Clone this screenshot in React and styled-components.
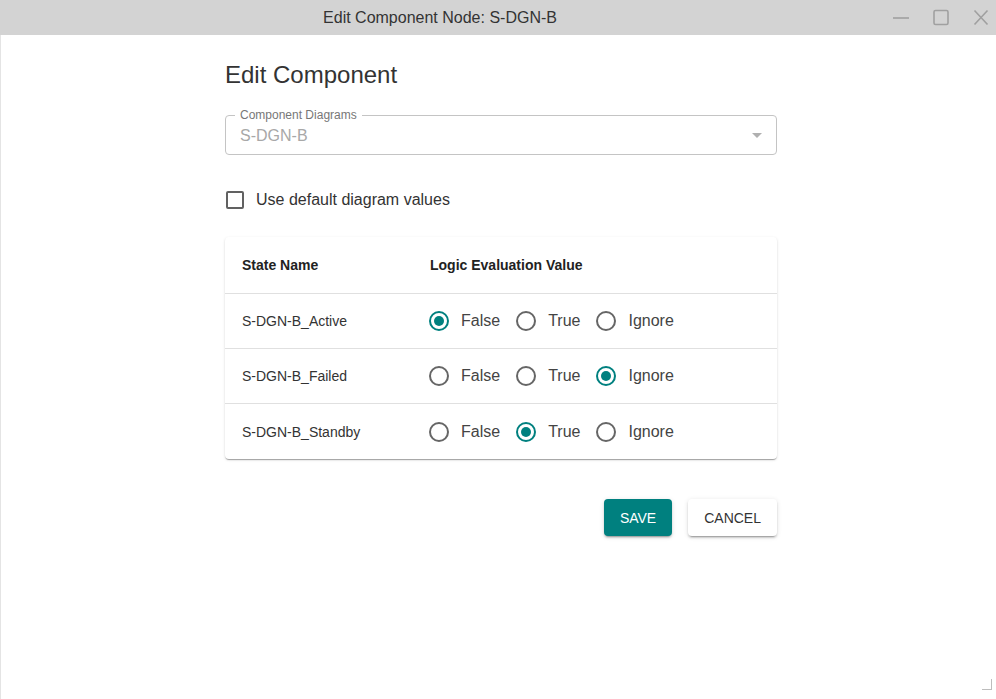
import styled, { createGlobalStyle } from 'styled-components'

const GlobalStyle = createGlobalStyle`
    html, body {
        margin: 0;
        padding: 0;
        background: #ffffff;
        font-family: "Liberation Sans", Arial, sans-serif;
    }
`;

const rows = [
    { name: 'S-DGN-B_Active', value: 'False' },
    { name: 'S-DGN-B_Failed', value: 'Ignore' },
    { name: 'S-DGN-B_Standby', value: 'True' },
]

const options = ['False', 'True', 'Ignore']

function Radio({ checked }) {
    return (
        <RadioIcon viewBox="0 0 24 24" $checked={checked}>
            <circle cx="12" cy="12" r="9" fill="none" strokeWidth="2" />
            {checked && <circle cx="12" cy="12" r="5" stroke="none" />}
        </RadioIcon>
    )
}

function App() {
    return (
        <Window>
            <GlobalStyle />
            <TitleBar>
                <Title>Edit Component Node: S-DGN-B</Title>
                <Controls>
                    <svg width="18" height="18" viewBox="0 0 18 18">
                        <line x1="1" y1="9" x2="17" y2="9" stroke="#a0a0a0" strokeWidth="1.6" />
                    </svg>
                    <svg width="18" height="18" viewBox="0 0 18 18">
                        <rect x="2" y="1.5" width="14" height="14" rx="1.5" fill="none" stroke="#a0a0a0" strokeWidth="1.6" />
                    </svg>
                    <svg width="18" height="18" viewBox="0 0 18 18">
                        <path d="M2.5 1.5 L15.5 15.5 M15.5 1.5 L2.5 15.5" stroke="#a0a0a0" strokeWidth="1.6" />
                    </svg>
                </Controls>
            </TitleBar>
            <Body>
                <Content>
                    <Heading>Edit Component</Heading>
                    <Field>
                        <Legend>Component Diagrams</Legend>
                        <FieldValue>S-DGN-B</FieldValue>
                        <Arrow viewBox="0 0 24 24">
                            <path d="M7 10l5 5 5-5z" />
                        </Arrow>
                    </Field>
                    <CheckRow>
                        <Box />
                        <CheckLabel>Use default diagram values</CheckLabel>
                    </CheckRow>
                    <Paper>
                        <HeadRow>
                            <NameCell $head>State Name</NameCell>
                            <ValueCell $head>Logic Evaluation Value</ValueCell>
                        </HeadRow>
                        {rows.map((row, i) => (
                            <Row key={row.name} $last={i === rows.length - 1}>
                                <NameCell>{row.name}</NameCell>
                                <ValueCell>
                                    {options.map((opt) => (
                                        <Option key={opt}>
                                            <Radio checked={row.value === opt} />
                                            <OptionLabel>{opt}</OptionLabel>
                                        </Option>
                                    ))}
                                </ValueCell>
                            </Row>
                        ))}
                    </Paper>
                    <Actions>
                        <Button $primary>SAVE</Button>
                        <Button>CANCEL</Button>
                    </Actions>
                </Content>
                <Grip />
            </Body>
        </Window>
    )
}

const Window = styled.div`
    min-height: 100vh;
    display: flex;
    flex-direction: column;
`;
const TitleBar = styled.div`
    height: 35px;
    background: #d3d3d3;
    display: flex;
    align-items: center;
`;
const Title = styled.div`
    flex: 1;
    text-align: center;
    font-size: 16px;
    color: #333333;
    padding-top: 1px;
`;
const Controls = styled.div`
    width: 116px;
    display: flex;
    align-items: center;
    gap: 22px;
    padding-left: 12px;
    box-sizing: border-box;
`;
const Body = styled.div`
    flex: 1;
    position: relative;
    border-left: 1px solid #e4e4e4;
`;
const Content = styled.div`
    width: 552px;
    margin-left: 224px;
    padding-top: 24px;
`;
const Heading = styled.h1`
    margin: 0;
    font-size: 24px;
    font-weight: 400;
    line-height: 32px;
    color: #333333;
`;
const Field = styled.div`
    position: relative;
    margin-top: 24px;
    height: 40px;
    border: 1px solid #c4c4c4;
    border-radius: 4px;
    box-sizing: border-box;
    display: flex;
    align-items: center;
    padding: 0 14px;
`;
const Legend = styled.span`
    position: absolute;
    top: -8px;
    left: 9px;
    padding: 0 5px;
    background: #ffffff;
    font-size: 12px;
    line-height: 14px;
    color: #777777;
`;
const FieldValue = styled.span`
    flex: 1;
    font-size: 16px;
    color: #a8a8a8;
    padding-top: 1px;
`;
const Arrow = styled.svg`
    width: 24px;
    height: 24px;
    fill: #b0b0b0;
    margin-right: -7px;
`;
const CheckRow = styled.div`
    margin-top: 24px;
    height: 42px;
    display: flex;
    align-items: center;
`;
const Box = styled.span`
    width: 18px;
    height: 18px;
    box-sizing: border-box;
    border: 2px solid #616161;
    border-radius: 2px;
    margin-left: 1px;
`;
const CheckLabel = styled.span`
    margin-left: 12px;
    font-size: 16px;
    color: #333333;
`;
const Paper = styled.div`
    margin-top: 16px;
    border-radius: 4px;
    background: #ffffff;
    box-shadow: 0 2px 1px -1px rgba(0, 0, 0, 0.2), 0 1px 1px 0 rgba(0, 0, 0, 0.14), 0 1px 3px 0 rgba(0, 0, 0, 0.12);
`;
const HeadRow = styled.div`
    height: 56px;
    display: flex;
    align-items: center;
    border-bottom: 1px solid #e0e0e0;
`;
const Row = styled.div`
    height: 55px;
    display: flex;
    align-items: center;
    border-bottom: ${(p) => (p.$last ? 'none' : '1px solid #e0e0e0')};
    box-sizing: border-box;
`;
const NameCell = styled.div`
    width: 205px;
    padding-left: 17px;
    box-sizing: border-box;
    font-size: 14px;
    font-weight: ${(p) => (p.$head ? 700 : 400)};
    color: ${(p) => (p.$head ? '#222222' : '#333333')};
`;
const ValueCell = styled.div`
    display: flex;
    align-items: center;
    font-size: 14px;
    font-weight: ${(p) => (p.$head ? 700 : 400)};
    color: ${(p) => (p.$head ? '#222222' : '#333333')};
`;
const Option = styled.label`
    display: flex;
    align-items: center;
    margin-right: 17px;
`;
const RadioIcon = styled.svg`
    width: 24px;
    height: 24px;
    margin-left: -3px;
    stroke: ${(p) => (p.$checked ? '#00807f' : '#666666')};
    fill: #00807f;
`;
const OptionLabel = styled.span`
    margin-left: 10px;
    font-size: 16px;
    color: #444444;
`;
const Actions = styled.div`
    margin-top: 40px;
    display: flex;
    justify-content: flex-end;
    gap: 16px;
`;
const Button = styled.button`
    height: 37px;
    padding: 0 16px;
    border: none;
    border-radius: 4px;
    font-family: "Liberation Sans", Arial, sans-serif;
    font-size: 14px;
    font-weight: 400;
    background: ${(p) => (p.$primary ? '#00807f' : '#ffffff')};
    color: ${(p) => (p.$primary ? '#ffffff' : '#333333')};
    box-shadow: 0 3px 1px -2px rgba(0, 0, 0, 0.2), 0 2px 2px 0 rgba(0, 0, 0, 0.14), 0 1px 5px 0 rgba(0, 0, 0, 0.12);
`;
const Grip = styled.span`
    position: absolute;
    right: 4px;
    bottom: 9px;
    width: 9px;
    height: 10px;
    border-right: 1px solid #bdbdbd;
    border-bottom: 1px solid #bdbdbd;
`;

export default App
